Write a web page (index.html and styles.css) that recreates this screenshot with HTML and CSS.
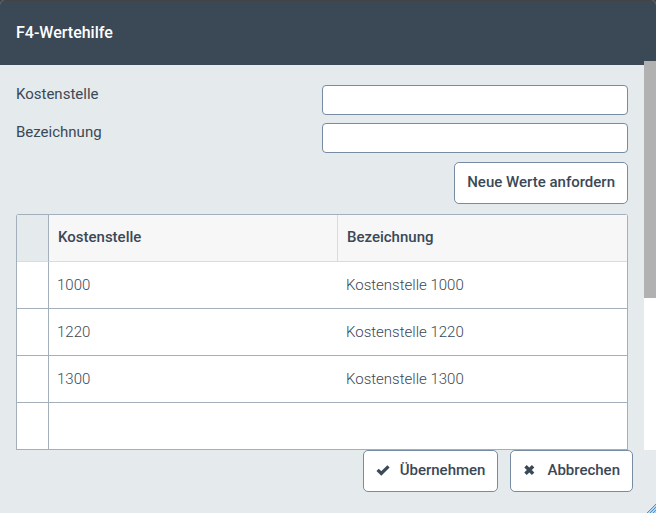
FILE: index.html
```html
<!DOCTYPE html>
<html lang="de">
<head>
    <meta charset="UTF-8">
    <meta name="viewport" content="width=device-width, initial-scale=1.0">
    <title>F4-Wertehilfe</title>
    <link rel="stylesheet" href="styles.css">
</head>
<body>

    <div class="dialog">
        <header class="dialog-header">
            <h1>F4-Wertehilfe</h1>
        </header>

        <div class="dialog-body">
            <main class="content">
                <form class="search-form">
                    <div class="field">
                        <label for="kostenstelle">Kostenstelle</label>
                        <input type="text" id="kostenstelle">
                    </div>
                    <div class="field">
                        <label for="bezeichnung">Bezeichnung</label>
                        <input type="text" id="bezeichnung">
                    </div>
                    <button type="button" class="request">Neue Werte anfordern</button>
                </form>

                <table class="values">
                    <thead>
                        <tr>
                            <th class="select"></th>
                            <th>Kostenstelle</th>
                            <th>Bezeichnung</th>
                        </tr>
                    </thead>
                    <tbody>
                        <tr>
                            <td class="select"></td>
                            <td>1000</td>
                            <td>Kostenstelle 1000</td>
                        </tr>
                        <tr>
                            <td class="select"></td>
                            <td>1220</td>
                            <td>Kostenstelle 1220</td>
                        </tr>
                        <tr>
                            <td class="select"></td>
                            <td>1300</td>
                            <td>Kostenstelle 1300</td>
                        </tr>
                        <tr>
                            <td class="select"></td>
                            <td></td>
                            <td></td>
                        </tr>
                    </tbody>
                </table>
            </main>

            <div class="scrollbar">
                <div class="thumb"></div>
            </div>
        </div>

        <footer class="dialog-footer">
            <button type="button">
                <svg width="14" height="14" viewBox="0 0 14 14" aria-hidden="true">
                    <path d="M1.6 6.8l3.7 3.7 7.2-7.2" fill="none" stroke="currentColor" stroke-width="3.2"/>
                </svg>
                Übernehmen
            </button>
            <button type="button">
                <svg width="14" height="14" viewBox="0 0 14 14" aria-hidden="true">
                    <path d="M2.5 3.2l7.6 7.6M10.1 3.2l-7.6 7.6" fill="none" stroke="currentColor" stroke-width="3.4"/>
                </svg>
                Abbrechen
            </button>
        </footer>

        <svg class="resize-grip" width="9" height="9" viewBox="0 0 9 9" aria-hidden="true">
            <path d="M9 0v9H0z" fill="#b5d4ee"/>
            <path d="M0 9l9-9M3 9l6-6M6 9l3-3" stroke="#4e94d0"/>
        </svg>
    </div>

</body>
</html>
```
FILE: styles.css
```css
* {
    box-sizing: border-box;
}

body {
    margin: 0;
    background: #444;
    color: #3b4856;
    font-family: Roboto, sans-serif;
    font-size: 15px;
    line-height: 18px;
}

.dialog {
    position: relative;
    display: flex;
    flex-direction: column;
    min-height: 100vh;
    background: #e5eaed;
    border-radius: 5px 5px 0 0;
}

.dialog-header {
    padding: 23px 16px 19px;
    background: #3b4856;
    border-top: 1px solid #444;
    border-radius: 5px 5px 0 0;
    color: white;
}

h1 {
    margin: 0;
    font-size: 16px;
    font-weight: 500;
    line-height: 18px;
}

.dialog-body {
    display: flex;
}

.content {
    flex: 1;
    padding: 20px 16px 0;
    border-top: 4px solid #3b4856;
}

.search-form {
    display: flex;
    flex-direction: column;
    gap: 8px;
}

.field {
    display: grid;
    grid-template-columns: 1fr 1fr;
}

input {
    height: 30px;
    padding: 0 8px;
    border: 1px solid #778ca2;
    border-radius: 4px;
    background: white;
    color: inherit;
    font: inherit;
}

button {
    display: flex;
    align-items: center;
    gap: 10px;
    height: 42px;
    padding: 0 12px 2px;
    border: 1px solid #778ca2;
    border-radius: 5px;
    background: white;
    color: #3b4856;
    font: inherit;
    font-weight: 500;
    cursor: pointer;
}

.request {
    align-self: flex-end;
    margin-top: 1px;
}

.values {
    width: 100%;
    margin-top: 10px;
    table-layout: fixed;
    border: 1px solid #a3b0bb;
    border-bottom: none;
    border-radius: 3px 3px 0 0;
    border-spacing: 0;
    background: white;
}

.values th,
.values td {
    height: 47px;
    padding: 0 8px;
    border-bottom: 1px solid #a3b0bb;
    text-align: left;
}

.values th {
    padding: 0 9px 2px;
    background: #f7f7f7;
    border-right: 1px solid #d9dcdf;
    border-bottom-color: #d9dcdf;
    font-weight: 500;
}

.values th:last-child {
    border-right: none;
}

.values td {
    font-weight: 300;
}

.values .select {
    width: 32px;
    border-right: 1px solid #a3b0bb;
}

.values th.select {
    background: #e5eaed;
}

.scrollbar {
    width: 12px;
    background: white;
}

.thumb {
    height: 61%;
    background: #b1b1b1;
}

.dialog-footer {
    display: flex;
    justify-content: flex-end;
    gap: 12px;
    padding: 0 23px 21px;
}

.resize-grip {
    position: absolute;
    right: 0;
    bottom: 0;
}
```
